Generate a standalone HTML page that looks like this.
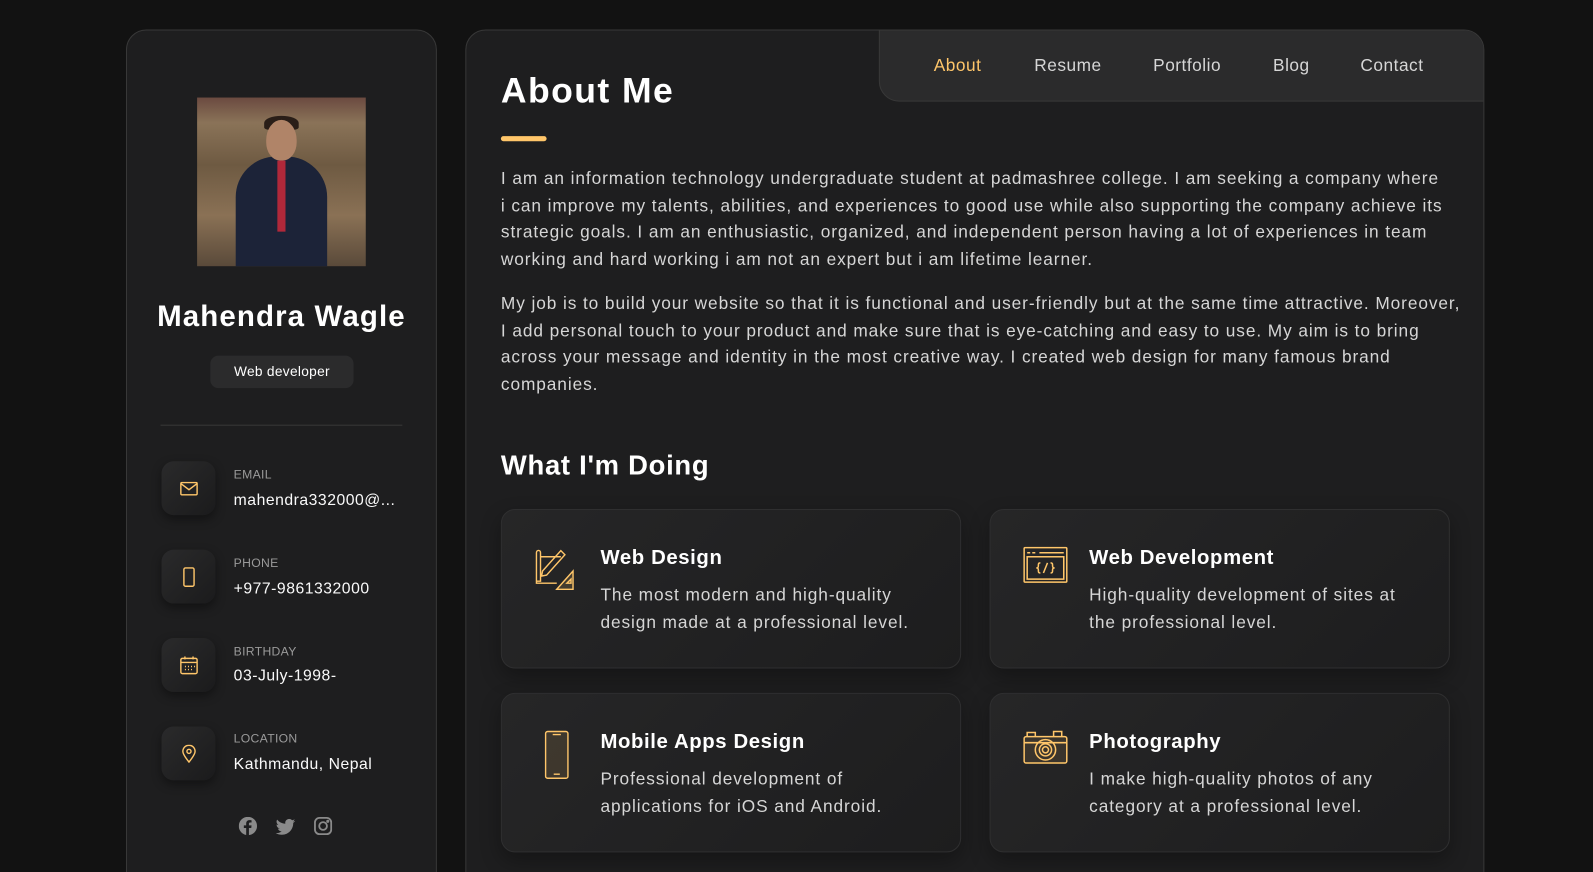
<!DOCTYPE html>
<html><head><meta charset="utf-8"><style>
*{margin:0;padding:0;box-sizing:border-box}
html,body{width:1593px;height:872px;overflow:hidden;background:#121212}
body{font-family:"Liberation Sans",sans-serif;color:#fff;position:relative}
#w{position:absolute;left:0;top:0;width:1568px;height:860px;transform:scale(1.016);transform-origin:0 0}
.side{position:absolute;left:124px;top:29px;width:306px;height:860px;background:#1e1e1f;border:1px solid #383838;border-radius:20px}
.photo{position:absolute;left:69px;top:66px;width:166px;height:166px;background:linear-gradient(180deg,#6b4a40 0%,#8a7358 15%,#6e5a42 40%,#8a7155 70%,#5a4a3a 100%);overflow:hidden}
.photo .man{position:absolute;left:38px;top:58px;width:90px;height:120px;background:#1c2338;border-radius:40px 40px 0 0}
.photo .head{position:absolute;left:68px;top:22px;width:30px;height:40px;background:#b08468;border-radius:50% 50% 45% 45%}
.photo .hair{position:absolute;left:66px;top:18px;width:34px;height:14px;background:#2a1e18;border-radius:50% 50% 20% 20%}
.name{position:absolute;top:266px;width:100%;text-align:center;font-size:29px;font-weight:600;letter-spacing:1.1px}
.tag{position:absolute;left:82px;top:320px;width:141px;height:32px;background:#2b2b2c;border-radius:8px;font-size:13.5px;text-align:center;line-height:32px;letter-spacing:.3px}
.sep{position:absolute;left:33px;top:388px;width:238px;height:1px;background:#383838}
.ci{position:absolute;left:34px;width:53px;height:53px;border-radius:12px;background:linear-gradient(135deg,#2a2a2b,#1b1b1c);box-shadow:0 4px 10px rgba(0,0,0,.4);display:flex;align-items:center;justify-content:center}
.cl{position:absolute;left:105px;font-size:12px;color:#9a9a9a;letter-spacing:.3px}
.cv{position:absolute;left:105px;font-size:15.5px;color:#fafafa;letter-spacing:.5px}
.main{position:absolute;left:458px;top:29px;width:1003px;height:860px;background:#1e1e1f;border:1px solid #383838;border-radius:20px;overflow:hidden}
.nav{position:absolute;right:-1px;top:-1px;width:596px;height:71px;background:#2b2b2c;border:1px solid #383838;border-radius:0 20px 0 20px}
.nav span{position:absolute;top:25px;font-size:17px;color:#d6d6d6;letter-spacing:.5px}
h1{position:absolute;left:34px;top:40px;font-size:35px;font-weight:700;letter-spacing:1.4px}
.bar{position:absolute;left:34px;top:104px;width:45px;height:5px;background:#ffc66a;border-radius:3px}
.p{position:absolute;left:34px;width:960px;font-size:17px;line-height:26.7px;color:#d6d6d6;white-space:nowrap;letter-spacing:.9px}
h2{position:absolute;left:34px;top:413px;font-size:27px;font-weight:700;letter-spacing:.7px}
.card{position:absolute;width:453px;height:157px;border-radius:14px;background:linear-gradient(135deg,#262627,#1d1d1e);border:1px solid #2f2f30;box-shadow:0 8px 20px rgba(0,0,0,.3)}
.card svg{position:absolute;left:32px;top:36px}
.card h3{position:absolute;left:97px;top:36px;font-size:20px;font-weight:700;letter-spacing:.6px}
.card p{position:absolute;left:97px;top:70px;width:345px;font-size:17px;line-height:27px;color:#d6d6d6;white-space:nowrap;letter-spacing:.9px}
</style></head><body><div id="w">
<div class="side">
<div class="photo"><div class="man"></div><div class="hair"></div><div class="head"></div><div style="position:absolute;left:79px;top:62px;width:8px;height:70px;background:#b0283a"></div></div>
<div class="name">Mahendra Wagle</div>
<div class="tag">Web developer</div>
<div class="sep"></div>
<div class="ci" style="top:424px"><svg width="18" height="14" viewBox="0 0 18 14" fill="none" stroke="#ffc66a" stroke-width="1.4"><rect x="1" y="1" width="16" height="12" rx="1"/><path d="M1 2l8 6 8-6"/></svg></div>
<div class="cl" style="top:430px">EMAIL</div><div class="cv" style="top:454px">mahendra332000@...</div>
<div class="ci" style="top:511px"><svg width="12" height="20" viewBox="0 0 12 20" fill="none" stroke="#ffc66a" stroke-width="1.4"><rect x="1" y="1" width="10" height="18" rx="1.5"/></svg></div>
<div class="cl" style="top:517px">PHONE</div><div class="cv" style="top:541px">+977-9861332000</div>
<div class="ci" style="top:598px"><svg width="18" height="18" viewBox="0 0 18 18" fill="none" stroke="#ffc66a" stroke-width="1.4"><rect x="1" y="2" width="16" height="15" rx="1.5"/><path d="M1 6h16M5 0v3M13 0v3M5 10h1M8 10h1M11 10h1M14 10h1M5 13h1M8 13h1M11 13h1"/></svg></div>
<div class="cl" style="top:604px">BIRTHDAY</div><div class="cv" style="top:627px">03-July-1998-</div>
<div class="ci" style="top:685px"><svg width="14" height="18" viewBox="0 0 14 18" fill="none" stroke="#ffc66a" stroke-width="1.4"><path d="M7 17C3 12 1 9 1 6.5a6 6 0 0112 0C13 9 11 12 7 17z"/><circle cx="7" cy="6.5" r="2"/></svg></div>
<div class="cl" style="top:690px">LOCATION</div><div class="cv" style="top:714px">Kathmandu, Nepal</div>
<svg style="position:absolute;left:110px;top:774px" width="18" height="18" viewBox="0 0 18 18"><circle cx="9" cy="9" r="9" fill="#8a8a8a"/><path d="M10 18v-7h2.3l.3-2.6H10V6.8c0-.7.2-1.2 1.2-1.2h1.4V3.3c-.3 0-1-.1-2-.1-2 0-3.3 1.2-3.3 3.4v1.8H5V11h2.3v7z" fill="#1e1e1f"/></svg>
<svg style="position:absolute;left:146px;top:776px" width="20" height="16" viewBox="0 0 24 20"><path d="M24 2.4a10 10 0 01-2.8.8A5 5 0 0023.3.5a10 10 0 01-3.1 1.2A4.9 4.9 0 0011.8 6 14 14 0 011.7.9a4.9 4.9 0 001.5 6.6 5 5 0 01-2.2-.6 4.9 4.9 0 003.9 4.9 5 5 0 01-2.2.1 4.9 4.9 0 004.6 3.4A9.9 9.9 0 010 17.3 14 14 0 007.5 19.5c9 0 14-7.5 14-14v-.6A10 10 0 0024 2.4z" fill="#8a8a8a"/></svg>
<svg style="position:absolute;left:184px;top:774px" width="18" height="18" viewBox="0 0 18 18" fill="none" stroke="#8a8a8a" stroke-width="1.8"><rect x="1" y="1" width="16" height="16" rx="4.5"/><circle cx="9" cy="9" r="3.8"/><circle cx="13.6" cy="4.4" r=".6" fill="#8a8a8a"/></svg>
</div>
<div class="main">
<div class="nav"><span style="left:53px;color:#ffc66a">About</span><span style="left:152px">Resume</span><span style="left:269px">Portfolio</span><span style="left:387px">Blog</span><span style="left:473px">Contact</span></div>
<h1>About Me</h1><div class="bar"></div>
<div class="p" style="top:133px">I am an information technology undergraduate student at padmashree college. I am seeking a company where<br>i can improve my talents, abilities, and experiences to good use while also supporting the company achieve its<br>strategic goals. I am an enthusiastic, organized, and independent person having a lot of experiences in team<br>working and hard working i am not an expert but i am lifetime learner.</div>
<div class="p" style="top:256px">My job is to build your website so that it is functional and user-friendly but at the same time attractive. Moreover,<br>I add personal touch to your product and make sure that is eye-catching and easy to use. My aim is to bring<br>across your message and identity in the most creative way. I created web design for many famous brand<br>companies.</div>
<h2>What I'm Doing</h2>
<div class="card" style="left:34px;top:471px"><svg width="44" height="44" viewBox="0 0 44 44" fill="none" stroke="#ffc66a" stroke-width="1.4"><path d="M2 6v30h20M2 6c0-3 4-3 4 0v28H2M6 10h20M8 24l18-20 4 4-18 20-5 1z"/><path d="M22 42l16-18v18z M32 36l4-4v4z" fill="rgba(255,198,106,.15)"/></svg><h3>Web Design</h3><p>The most modern and high-quality<br>design made at a professional level.</p></div>
<div class="card" style="left:515px;top:471px"><svg width="44" height="36" viewBox="0 0 44 36" fill="none" stroke="#ffc66a" stroke-width="1.5"><rect x="1" y="1" width="42" height="34" rx="1"/><rect x="4" y="10" width="36" height="22"/><path d="M4 6h3M9 6h3M16 6h24M17 16c-2 0-2 1-2 3s-1 2-2 2c1 0 2 0 2 2s0 3 2 3M27 16c2 0 2 1 2 3s1 2 2 2c-1 0-2 0-2 2s0 3-2 3M24 16l-4 10"/></svg><h3>Web Development</h3><p>High-quality development of sites at<br>the professional level.</p></div>
<div class="card" style="left:34px;top:652px"><svg style="left:42px" width="24" height="48" viewBox="0 0 24 48" fill="none" stroke="#ffc66a" stroke-width="1.4"><rect x="1" y="1" width="22" height="46" rx="2" fill="rgba(255,198,106,.12)"/><path d="M8 4h8M9 43h6"/></svg><h3>Mobile Apps Design</h3><p>Professional development of<br>applications for iOS and Android.</p></div>
<div class="card" style="left:515px;top:652px"><svg width="44" height="34" viewBox="0 0 44 34" fill="none" stroke="#ffc66a" stroke-width="1.5"><rect x="1" y="6" width="42" height="26" rx="2" fill="rgba(255,198,106,.1)"/><path d="M4 6V2h8v4M30 6V1h8v5M1 12h42"/><circle cx="22" cy="19" r="10"/><circle cx="22" cy="19" r="6"/><circle cx="22" cy="19" r="3"/></svg><h3>Photography</h3><p>I make high-quality photos of any<br>category at a professional level.</p></div>
</div>
</div></body></html>
